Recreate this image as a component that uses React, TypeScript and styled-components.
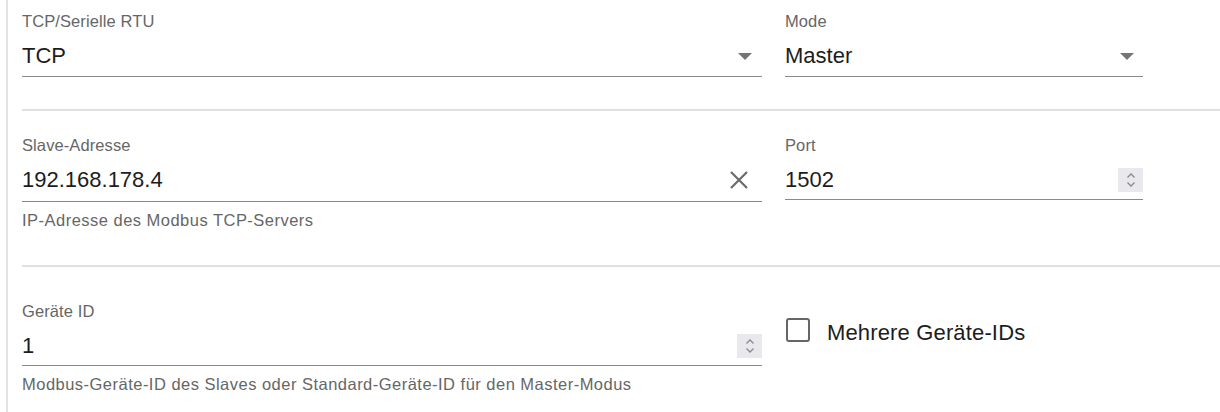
import React from "react";
import styled, { createGlobalStyle } from "styled-components";

const Global = createGlobalStyle`
  html, body { margin: 0; padding: 0; background: #fff; }
  body { font-family: "Liberation Sans", Arial, Helvetica, sans-serif; }
`;

const Page = styled.div`
  margin-left: 6px;
  border-left: 2px solid #e2e2e2;
  padding-left: 14px;
  height: 412px;
  box-sizing: border-box;
  padding-top: 11px;
`;

const Row = styled.div<{ $top: number }>`
  display: flex;
  gap: 23px;
  margin-top: ${(p) => p.$top}px;
`;

const Divider = styled.div<{ $top: number }>`
  height: 2px;
  background: #e0e0e0;
  margin-top: ${(p) => p.$top}px;
`;

const Field = styled.div<{ $w: number }>`
  width: ${(p) => p.$w}px;
  display: flex;
  flex-direction: column;
`;

const Label = styled.div`
  font-size: 16.5px;
  line-height: 20px;
  letter-spacing: 0.1px;
  color: #666;
  height: 20px;
`;

const InputRow = styled.div<{ $pb: number }>`
  display: flex;
  align-items: center;
  padding-top: 10px;
  padding-bottom: ${(p) => p.$pb}px;
  border-bottom: 1px solid #8a8a8a;
`;

const Value = styled.div`
  flex: 1;
  font-size: 22px;
  line-height: 30px;
  height: 30px;
  color: #1d1d1d;
`;

const Helper = styled.div`
  margin-top: 8px;
  font-size: 16.5px;
  line-height: 20px;
  color: #666;
  letter-spacing: 0.48px;
`;

const Adorn = styled.div<{ $mr: number }>`
  display: flex;
  align-items: center;
  justify-content: center;
  margin-right: ${(p) => p.$mr}px;
`;

const Spin = styled.div`
  width: 25px;
  height: 24px;
  background: #e9e9ed;
  display: flex;
  align-items: center;
  justify-content: center;
`;

const CheckWrap = styled.label`
  display: flex;
  align-items: center;
  gap: 17px;
  margin-top: 16px;
  margin-left: 1px;
  height: 26px;
`;

const Box = styled.span`
  width: 20px;
  height: 20px;
  border: 2.5px solid #666;
  border-radius: 3px;
  display: inline-block;
`;

const CheckText = styled.span`
  font-size: 22px;
  color: #1d1d1d;
  line-height: 26px;
  letter-spacing: 0.15px;
  margin-top: 5px;
`;

const Arrow = () => (
  <svg width="14" height="7" viewBox="0 0 14 7">
    <path d="M0 0 L14 0 L7 7 Z" fill="#757575" />
  </svg>
);

const Clear = () => (
  <svg width="20" height="20" viewBox="0 0 20 20">
    <path d="M2 2 L18 18 M18 2 L2 18" stroke="#6a6a6a" strokeWidth="2.2" />
  </svg>
);

const SpinIcon = () => (
  <svg width="10" height="18" viewBox="0 0 10 18">
    <path d="M1.5 6.5 L5 3 L8.5 6.5 M1.5 11.5 L5 15 L8.5 11.5" stroke="#8a8a8a" strokeWidth="1.3" fill="none" />
  </svg>
);

export default function App() {
  return (
    <>
      <Global />
      <Page>
        <Row $top={0}>
          <Field $w={740}>
            <Label>TCP/Serielle RTU</Label>
            <InputRow $pb={5}>
              <Value>TCP</Value>
              <Adorn $mr={10}><Arrow /></Adorn>
            </InputRow>
          </Field>
          <Field $w={358}>
            <Label>Mode</Label>
            <InputRow $pb={5}>
              <Value>Master</Value>
              <Adorn $mr={9}><Arrow /></Adorn>
            </InputRow>
          </Field>
        </Row>
        <Divider $top={32} />
        <Row $top={24}>
          <Field $w={740}>
            <Label>Slave-Adresse</Label>
            <InputRow $pb={6}>
              <Value>192.168.178.4</Value>
              <Adorn $mr={13}><Clear /></Adorn>
            </InputRow>
            <Helper>IP-Adresse des Modbus TCP-Servers</Helper>
          </Field>
          <Field $w={358}>
            <Label>Port</Label>
            <InputRow $pb={4}>
              <Value>1502</Value>
              <Adorn $mr={0}><Spin><SpinIcon /></Spin></Adorn>
            </InputRow>
          </Field>
        </Row>
        <Divider $top={35} />
        <Row $top={34}>
          <Field $w={740}>
            <Label>Geräte ID</Label>
            <InputRow $pb={4}>
              <Value>1</Value>
              <Adorn $mr={0}><Spin><SpinIcon /></Spin></Adorn>
            </InputRow>
            <Helper>Modbus-Geräte-ID des Slaves oder Standard-Geräte-ID für den Master-Modus</Helper>
          </Field>
          <Field $w={358}>
            <CheckWrap>
              <Box />
              <CheckText>Mehrere Geräte-IDs</CheckText>
            </CheckWrap>
          </Field>
        </Row>
      </Page>
    </>
  );
}
